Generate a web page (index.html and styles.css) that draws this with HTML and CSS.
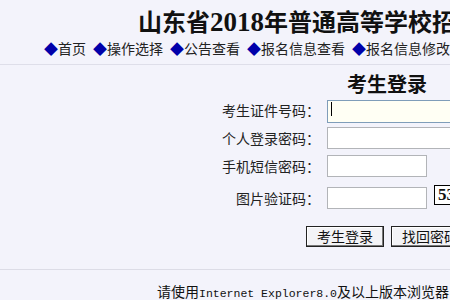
FILE: index.html
```html
<!DOCTYPE html>
<html lang="zh-CN">
<head>
<meta charset="utf-8">
<title>考生登录</title>
<link rel="stylesheet" href="styles.css">
</head>
<body>
<div class="page">
  <header class="header">
    <h1 class="title">山东省<span class="num">2018</span>年普通高等学校招生报名系统</h1>
    <nav class="nav">
      <a class="nav-item"><span class="dia">◆</span>首页</a>
      <a class="nav-item"><span class="dia">◆</span>操作选择</a>
      <a class="nav-item"><span class="dia">◆</span>公告查看</a>
      <a class="nav-item"><span class="dia">◆</span>报名信息查看</a>
      <a class="nav-item"><span class="dia">◆</span>报名信息修改</a>
    </nav>
  </header>
  <main class="login">
    <h2 class="login-title">考生登录</h2>
    <div class="row row1">
      <label class="lbl">考生证件号码：</label>
      <span class="field-wrap"><input class="field field-wide field-focus" type="text"></span>
    </div>
    <div class="row row2">
      <label class="lbl">个人登录密码：</label>
      <input class="field field-wide" type="password">
    </div>
    <div class="row row3">
      <label class="lbl">手机短信密码：</label>
      <input class="field" type="text">
    </div>
    <div class="row row4">
      <label class="lbl">图片验证码：</label>
      <input class="field" type="text">
      <span class="captcha">5376</span>
    </div>
    <div class="buttons">
      <button class="btn btn1">考生登录</button>
      <button class="btn btn2">找回密码</button>
    </div>
  </main>
  <footer class="footer">请使用<span class="mono">Internet Explorer8.0</span>及以上版本浏览器</footer>
</div>
</body>
</html>
```
FILE: styles.css
```css
html, body {
  margin: 0;
  padding: 0;
  background: #f3f3fb;
  overflow: hidden;
}
.page {
  width: 450px;
  height: 300px;
  overflow: hidden;
  font-family: "Noto Sans CJK SC", sans-serif;
  color: #111;
}
.header {
  height: 64px;
  border-bottom: 1px solid #dedee9;
  box-sizing: content-box;
}
.title {
  margin: 0;
  padding: 8px 0 0 138px;
  font-family: "Liberation Serif", "Noto Sans CJK SC", serif;
  font-size: 24px;
  line-height: 28px;
  font-weight: bold;
  white-space: nowrap;
  color: #111;
}
.num {
  font-size: 27px;
}
.nav {
  margin-top: 2px;
  padding-left: 44px;
  white-space: nowrap;
  font-size: 14px;
  line-height: 18px;
  color: #222;
  display: flex;
}
.nav-item {
  margin-right: 7px;
  flex: none;
}
.dia {
  color: #0000aa;
}
.login {
  position: relative;
}
.login-title {
  margin: 0;
  padding: 7px 0 0 347px;
  font-size: 20px;
  line-height: 24px;
  font-weight: bold;
  white-space: nowrap;
  color: #111;
}
.row {
  display: flex;
  align-items: center;
  white-space: nowrap;
  height: 23px;
}
.row1 { margin-top: 2px; }
.row2 { margin-top: 5px; }
.row3 { margin-top: 5px; }
.row4 { margin-top: 9px; }
.lbl {
  width: 320px;
  text-align: right;
  font-size: 14px;
  flex: none;
  color: #222;
}
.field {
  margin: 0 0 0 7px;
  height: 22px;
  width: 100px;
  box-sizing: border-box;
  border: 1px solid #b2b4b8;
  background: #fff;
  padding: 0;
  flex: none;
}
.field-wide {
  width: 160px;
}
.field-wrap {
  position: relative;
  display: inline-block;
  flex: none;
}
.field-focus {
  height: 23px;
  border-color: #7f9db9;
  background: #fffff4;
}
.field-wrap::after {
  content: "";
  position: absolute;
  left: 11px;
  top: 5px;
  width: 1px;
  height: 14px;
  background: #000;
}
.captcha {
  margin-left: 7px;
  margin-top: -6px;
  height: 20px;
  width: 40px;
  box-sizing: border-box;
  border: 1px solid #000;
  background: #fff;
  font-family: "Liberation Serif", serif;
  font-size: 17px;
  line-height: 18px;
  font-weight: bold;
  padding-left: 3px;
  flex: none;
}
.buttons {
  display: flex;
  padding-left: 306px;
  margin-top: 17px;
  white-space: nowrap;
}
.btn {
  height: 21px;
  width: 78px;
  padding: 0;
  margin: 0 7px 0 0;
  font-family: "Noto Sans CJK SC", sans-serif;
  font-size: 14px;
  line-height: 17px;
  color: #111;
  background: #f3f3f6;
  border: 1px solid #222;
  box-shadow: inset -1px -1px 0 #777, inset 1px 1px 0 #fff;
  flex: none;
}
.footer {
  margin-top: 22px;
  border-top: 1px solid #dcdce6;
  padding: 12px 0 0 157px;
  font-size: 14px;
  line-height: 18px;
  white-space: nowrap;
  color: #111;
}
.mono {
  font-family: "Liberation Mono", monospace;
  font-size: 11.5px;
}
```
